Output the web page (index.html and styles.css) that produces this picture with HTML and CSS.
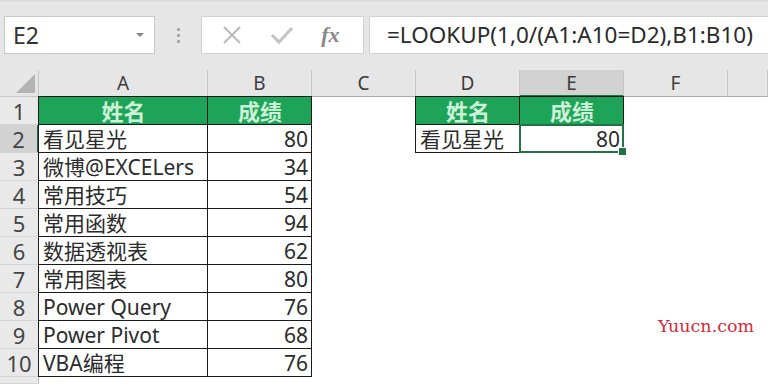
FILE: index.html
```html
<!DOCTYPE html>
<html lang="zh-CN">
<head>
    <meta charset="UTF-8">
    <title>LOOKUP</title>
    <link rel="stylesheet" href="styles.css">
</head>
<body>
    <!-- 编辑栏 -->
    <div class="formula-bar">
        <div class="name-box">
            <span>E2</span>
            <span class="drop"></span>
        </div>
        <div class="grip"><i></i><i></i><i></i></div>
        <div class="fx-buttons">
            <svg class="btn" width="22" height="22" viewBox="0 0 22 22"><path d="M3 3 L19 19 M19 3 L3 19" stroke="#b8b8b8" stroke-width="2" fill="none"/></svg>
            <svg class="btn" width="24" height="22" viewBox="0 0 24 22"><path d="M2 11 L9 18 L22 4" stroke="#c4c4c4" stroke-width="3" fill="none"/></svg>
            <span class="fx">fx</span>
        </div>
        <div class="formula">=LOOKUP(1,0/(A1:A10=D2),B1:B10)</div>
    </div>

    <!-- 工作表 -->
    <div class="sheet" id="sheet"></div>

    <div class="mark">Yuucn.com</div>

    <script>
        const cols = ['A', 'B', 'C', 'D', 'E', 'F', ''];
        const names = ['看见星光', '微博@EXCELers', '常用技巧', '常用函数', '数据透视表', '常用图表', 'Power Query', 'Power Pivot', 'VBA编程'];
        const scores = [80, 34, 54, 94, 62, 80, 76, 68, 76];
        const sheet = document.getElementById('sheet');

        function cell(text, cls) {
            const div = document.createElement('div');
            div.className = 'cell ' + (cls || '');
            div.textContent = text;
            sheet.appendChild(div);
        }

        // 列标题
        cell('', 'corner');
        cols.forEach(c => cell(c, 'col-head' + (c === 'E' ? ' sel' : '')));

        for (let r = 1; r <= 10; r++) {
            cell(r, 'row-head' + (r === 2 ? ' sel' : ''));
            if (r === 1) {
                cell('姓名', 'head bd');
                cell('成绩', 'head bd');
            } else {
                cell(names[r - 2], 'bd');
                cell(scores[r - 2], 'bd num');
            }
            cell('', '');
            if (r === 1) {
                cell('姓名', 'head bd');
                cell('成绩', 'head bd');
            } else if (r === 2) {
                cell('看见星光', 'bd');
                cell('80', 'num active');
            } else {
                cell('', '');
                cell('', '');
            }
            cell('', '');
            cell('', '');
        }
        cell('', 'row-head last');
    </script>
</body>
</html>
```

FILE: styles.css
```css
* {
    margin: 0;
    padding: 0;
    box-sizing: border-box;
}

body {
    width: 768px;
    height: 384px;
    overflow: hidden;
    background: #fff;
    font-family: 'Noto Sans', 'Noto Sans CJK SC', sans-serif;
    color: #2b2b2b;
}

.formula-bar {
    height: 70px;
    background: #e6e6e6;
    border-top: 2px solid #dcdcdc;
    display: flex;
    align-items: flex-start;
    padding: 14px 0 0 4px;
}

.name-box {
    width: 151px;
    height: 38px;
    background: #fff;
    border: 1px solid #c8c8c8;
    display: flex;
    align-items: center;
    justify-content: space-between;
    padding: 0 10px 0 8px;
    font-size: 23px;
    color: #333;
}

.drop {
    width: 0;
    height: 0;
    border-left: 4px solid transparent;
    border-right: 4px solid transparent;
    border-top: 4px solid #888;
}

.grip {
    width: 46px;
    height: 38px;
    display: flex;
    flex-direction: column;
    align-items: center;
    justify-content: center;
    gap: 3px;
}

.grip i {
    width: 3px;
    height: 3px;
    background: #aaa;
}

.fx-buttons {
    width: 163px;
    height: 38px;
    background: #fff;
    border: 1px solid #d2d2d2;
    display: flex;
    align-items: center;
    justify-content: space-around;
    padding: 0 10px 0 6px;
}

.fx {
    font-family: 'Liberation Serif', serif;
    font-style: italic;
    font-weight: bold;
    font-size: 22px;
    color: #888;
}

.formula {
    flex: 1;
    height: 38px;
    margin-left: 5px;
    background: #fff;
    border: 1px solid #d2d2d2;
    border-right: none;
    font-size: 22.5px;
    line-height: 36px;
    padding-left: 17px;
    color: #2a2a2a;
    white-space: nowrap;
}

.sheet {
    display: grid;
    grid-template-columns: 39px 169px 104px 104px 104px 104px 104px 40px;
    grid-template-rows: 27px repeat(10, 28px) 7px;
}

.cell {
    position: relative;
    font-size: 21px;
    line-height: 28px;
    padding: 0 4px;
    white-space: nowrap;
    overflow: visible;
}

.bd::after {
    content: '';
    position: absolute;
    left: -1px;
    top: -1px;
    right: 0;
    bottom: 0;
    border: 1px solid #1a1a1a;
}

.corner {
    background: #e6e6e6;
    border-right: 1px solid #c6c6c6;
    border-bottom: 1px solid #c6c6c6;
}

.corner::after {
    content: '';
    position: absolute;
    right: 3px;
    bottom: 3px;
    border-left: 19px solid transparent;
    border-bottom: 19px solid #b4b4b4;
}

.col-head {
    background: #e6e6e6;
    border-right: 1px solid #c6c6c6;
    border-bottom: 1px solid #ababab;
    text-align: center;
    font-size: 19px;
    line-height: 27px;
    color: #3c3c3c;
}

.col-head.sel {
    background: #d2d2d2;
    border-bottom: 2px solid #217346;
}

.row-head {
    background: #e9e9e9;
    border-right: 1px solid #bdbdbd;
    border-bottom: 1px solid #d6d6d6;
    text-align: center;
    padding: 0;
    font-size: 22px;
    color: #444;
}

.row-head.sel {
    background: #d2d2d2;
    border-right: 2px solid #217346;
}

.head {
    background: #1ea458;
    color: #ccf3d7;
    font-weight: bold;
    text-align: center;
    font-size: 22px;
}

.num {
    text-align: right;
}

.active {
    border: 2px solid #217346;
    margin: -1px 0 0 -1px;
    line-height: 26px;
    padding-right: 2px;
}

.active::after {
    content: '';
    position: absolute;
    right: -5px;
    bottom: -5px;
    width: 7px;
    height: 7px;
    background: #217346;
    border: 1px solid #fff;
}

.mark {
    position: absolute;
    left: 658px;
    top: 316px;
    font-family: 'DejaVu Serif', serif;
    font-size: 17.5px;
    color: #d42a3c;
}
```
